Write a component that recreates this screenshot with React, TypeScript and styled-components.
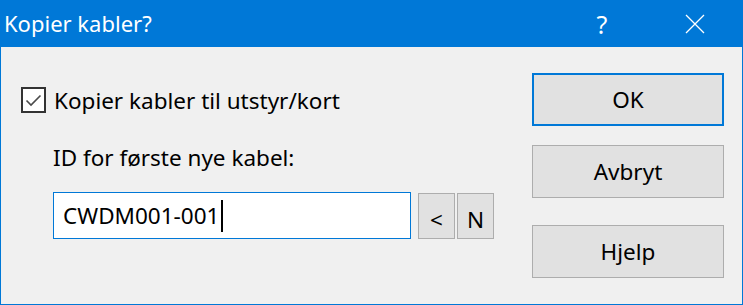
import React from 'react';
import styled, { createGlobalStyle } from 'styled-components';

const GlobalStyle = createGlobalStyle`
  html, body {
    margin: 0;
    padding: 0;
    background: #ffffff;
  }
  body {
    font-family: 'Noto Sans', 'Open Sans', sans-serif;
  }
`;

const Window = styled.div`
  box-sizing: border-box;
  width: 743px;
  height: 305px;
  display: flex;
  flex-direction: column;
  border: 1px solid #0078d7;
  border-top: none;
  background: #f0f0f0;
`;

const TitleBar = styled.div`
  display: flex;
  align-items: center;
  height: 47px;
  margin: 0 -1px;
  background: #0078d7;
  color: #ffffff;
`;

const Title = styled.div`
  flex: 1;
  padding-left: 4px;
  font-size: 22px;
  line-height: 47px;
`;

const TitleButton = styled.div<{ $width: number }>`
  display: flex;
  align-items: center;
  justify-content: center;
  width: ${(p) => p.$width}px;
  height: 47px;
  font-size: 25px;
`;

const Content = styled.div`
  flex: 1;
  display: flex;
  justify-content: space-between;
`;

const LeftColumn = styled.div`
  display: flex;
  flex-direction: column;
  padding-left: 20px;
`;

const CheckRow = styled.label`
  display: flex;
  align-items: center;
  gap: 8px;
  margin-top: 40px;
  height: 26px;
  font-size: 22.5px;
  color: #000000;
`;

const CheckBox = styled.span`
  box-sizing: border-box;
  display: flex;
  align-items: center;
  justify-content: center;
  width: 25px;
  height: 26px;
  border: 2px solid #333333;
  background: #ffffff;
`;

const FieldLabel = styled.div`
  margin-top: 31px;
  padding-left: 32px;
  height: 28px;
  line-height: 28px;
  font-size: 22.5px;
  color: #000000;
`;

const InputRow = styled.div`
  display: flex;
  align-items: flex-start;
  margin-top: 20px;
  padding-left: 32px;
`;

const TextField = styled.div`
  box-sizing: border-box;
  display: flex;
  align-items: center;
  width: 358px;
  height: 47px;
  padding-left: 9px;
  border: 1px solid #0078d7;
  background: #ffffff;
  font-size: 22.5px;
  color: #000000;
`;

const Caret = styled.span`
  display: inline-block;
  width: 2px;
  height: 32px;
  margin-left: 2px;
  background: #000000;
`;

const SmallButton = styled.div<{ $first?: boolean }>`
  box-sizing: border-box;
  display: flex;
  align-items: center;
  justify-content: center;
  width: 37px;
  height: 46px;
  margin-left: ${(p) => (p.$first ? '7px' : '2px')};
  margin-top: 1px;
  padding-top: 6px;
  border: 1px solid #adadad;
  background: #e1e1e1;
  font-size: 22.5px;
  color: #000000;
`;

const RightColumn = styled.div`
  display: flex;
  flex-direction: column;
  width: 192px;
  margin-right: 18px;
  padding-top: 26px;
`;

const DialogButton = styled.div<{ $default?: boolean; $gap?: number }>`
  box-sizing: border-box;
  display: flex;
  align-items: center;
  justify-content: center;
  height: 53px;
  margin-top: ${(p) => p.$gap ?? 0}px;
  border: ${(p) => (p.$default ? '2px solid #0078d7' : '1px solid #adadad')};
  background: #e1e1e1;
  font-size: 22.5px;
  color: #000000;
`;

const App: React.FC = () => {
  return (
    <>
      <GlobalStyle />
      <Window>
        <TitleBar>
          <Title>Kopier kabler?</Title>
          <TitleButton $width={90}>?</TitleButton>
          <TitleButton $width={96}>
            <svg width="20" height="20" viewBox="0 0 20 20">
              <path d="M1 1 L19 19 M19 1 L1 19" stroke="#ffffff" strokeWidth="1.3" fill="none" />
            </svg>
          </TitleButton>
        </TitleBar>
        <Content>
          <LeftColumn>
            <CheckRow>
              <CheckBox>
                <svg width="19" height="19" viewBox="0 0 19 19">
                  <path d="M2.5 9.5 L7 14 L16.5 4.5" stroke="#4a4a4a" strokeWidth="1.6" fill="none" />
                </svg>
              </CheckBox>
              Kopier kabler til utstyr/kort
            </CheckRow>
            <FieldLabel>ID for første nye kabel:</FieldLabel>
            <InputRow>
              <TextField>
                CWDM001-001
                <Caret />
              </TextField>
              <SmallButton $first>&lt;</SmallButton>
              <SmallButton>N</SmallButton>
            </InputRow>
          </LeftColumn>
          <RightColumn>
            <DialogButton $default>OK</DialogButton>
            <DialogButton $gap={19}>Avbryt</DialogButton>
            <DialogButton $gap={27}>Hjelp</DialogButton>
          </RightColumn>
        </Content>
      </Window>
    </>
  );
};

export default App;
